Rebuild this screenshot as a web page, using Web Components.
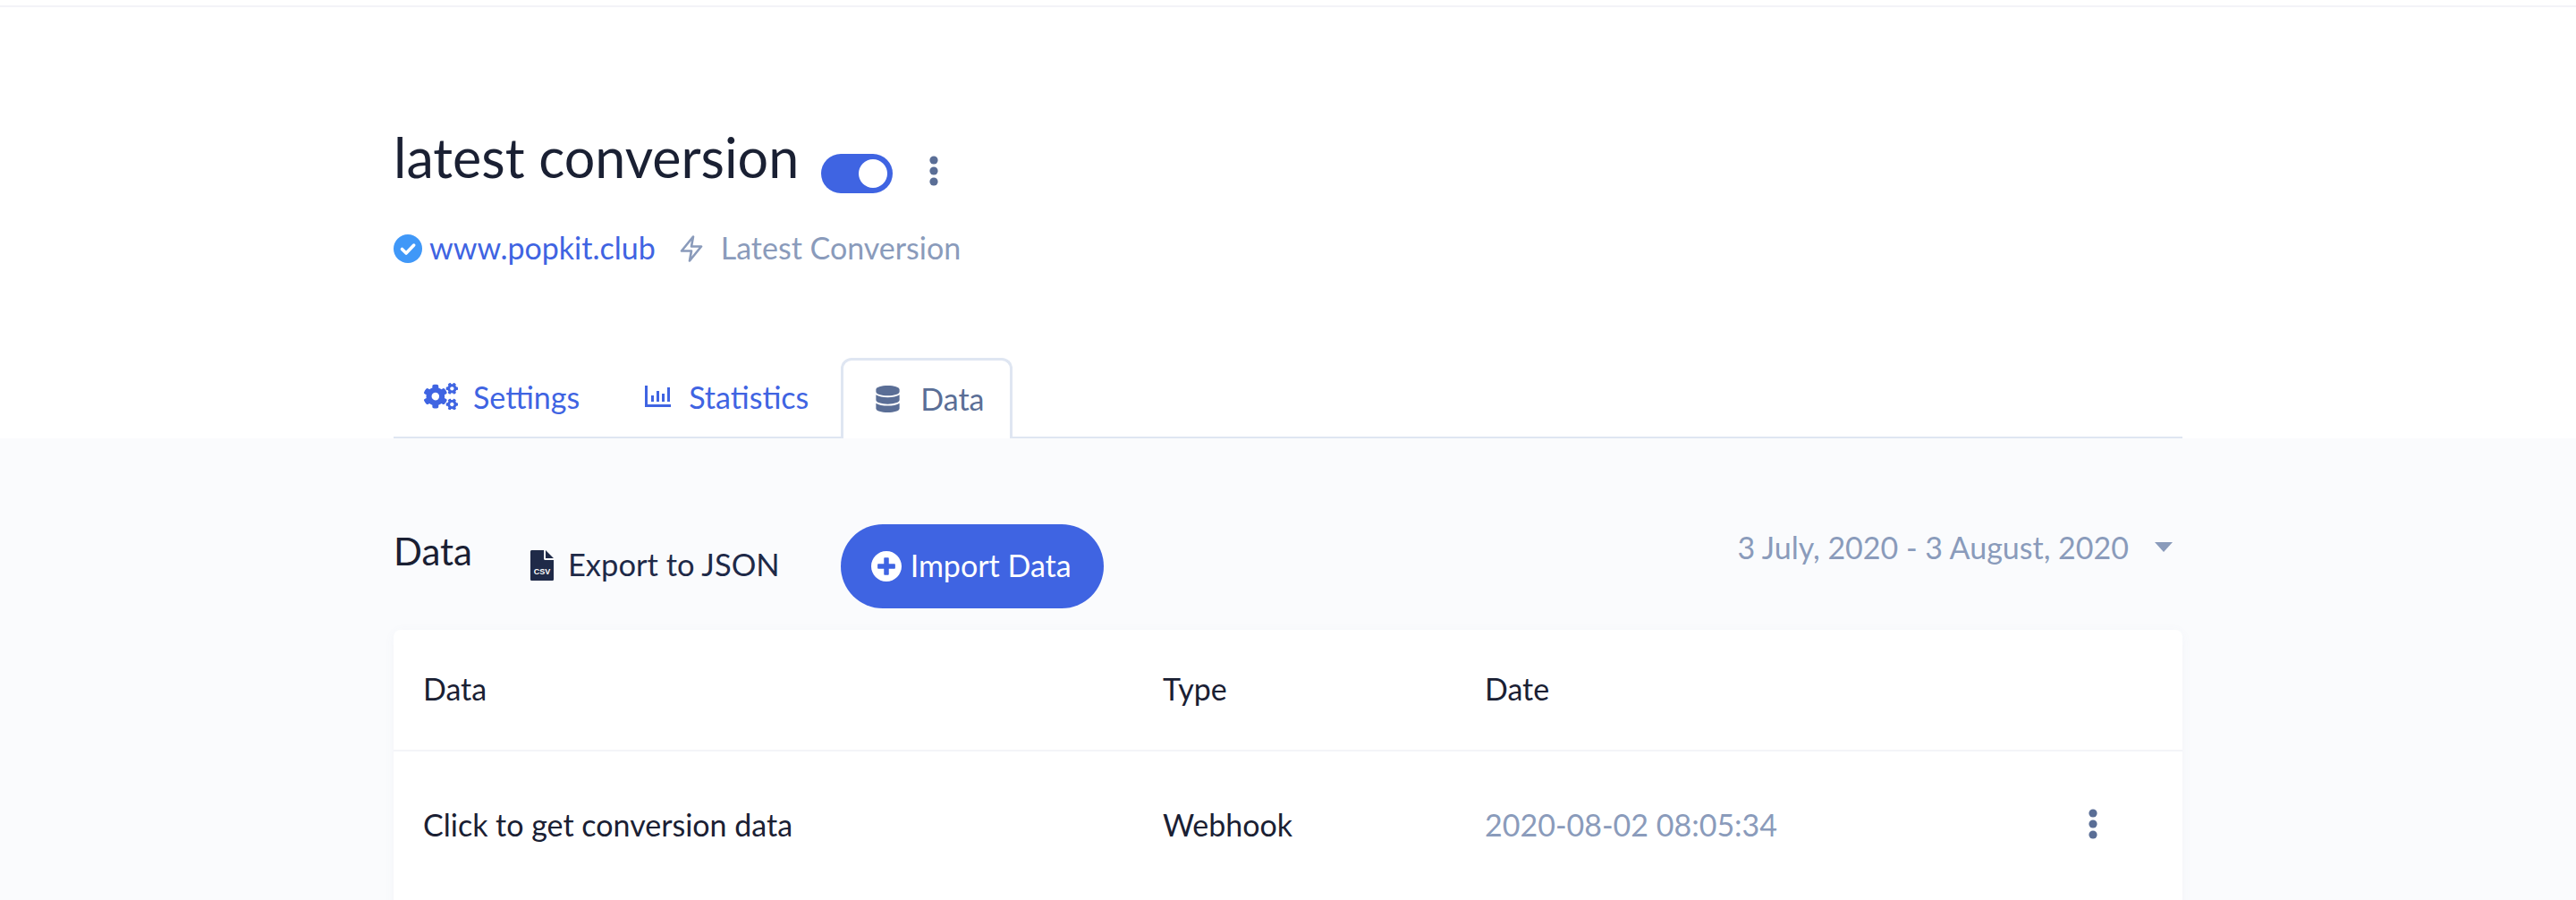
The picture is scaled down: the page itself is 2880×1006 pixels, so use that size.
<!DOCTYPE html>
<html>
<head>
<meta charset="utf-8">
<title>latest conversion</title>
<style>
    html, body { margin: 0; height: 1006px; overflow: hidden; background: #fff; }
    body { font-family: "Lato", "Liberation Sans", sans-serif; color: #1a2033; }
</style>
</head>
<body>
<campaign-header></campaign-header>
<data-panel></data-panel>

<script>
const DOTS = `<svg width="10" height="34" viewBox="0 0 10 34" fill="#5a6e96"><circle cx="5" cy="5" r="4.6"/><circle cx="5" cy="17" r="4.6"/><circle cx="5" cy="29" r="4.6"/></svg>`;

class CampaignHeader extends HTMLElement {
    constructor() {
        super();
        this.attachShadow({ mode: 'open' }).innerHTML = `
            <style>
                :host { display: block; border-top: 2px solid #f3f3f8; margin-top: 6px; }
                .wrap { width: 2000px; margin: 0 auto; padding-top: 136px; }
                .title { display: flex; align-items: flex-start; height: 64px; }
                h1 { margin: 0; font-size: 61px; line-height: 64px; font-weight: 400; color: #1a2033; }
                .toggle { width: 80px; height: 44px; margin: 28px 0 0 25px; border-radius: 22px; background: #3f64e2; display: flex; justify-content: flex-end; align-items: center; padding-right: 6px; box-sizing: border-box; }
                .toggle i { width: 32px; height: 32px; border-radius: 50%; background: #fff; }
                .more { margin: 30px 0 0 41px; }
                .meta { display: flex; align-items: center; height: 32px; margin-top: 54px; font-size: 34px; }
                .meta a { color: #3f64e2; margin-left: 8px; padding-bottom: 3px; }
                .meta span { color: #8a9bbb; margin-left: 20px; padding-bottom: 3px; }
                .meta .bolt { margin-left: 27px; }
                .tabs { display: flex; margin-top: 106px; border-bottom: 2px solid #dfe6f2; height: 88px; font-size: 34px; }
                .tab { display: flex; align-items: center; color: #3f64e2; padding-bottom: 2px; }
                .tab svg { fill: currentColor; display: block; }
                .settings { margin-left: 34px; }
                .settings svg { margin-right: 17px; }
                .stats { margin-left: 73px; }
                .stats svg { margin-right: 20px; }
                .data { margin-left: 36px; padding: 0 28px 2px 36px; height: 90px; box-sizing: border-box; color: #5a6e96; background: #fff; border: 3px solid #dfe6f2; border-bottom: none; border-radius: 12px 12px 0 0; margin-bottom: -2px; }
                .data svg { margin-right: 23px; }
            </style>
            <div class="wrap">
                <div class="title">
                    <h1>latest conversion</h1>
                    <div class="toggle"><i></i></div>
                    <div class="more">${DOTS}</div>
                </div>
                <div class="meta">
                    <svg width="32" height="32" viewBox="0 0 32 32"><circle cx="16" cy="16" r="16" fill="#4098f8"/><path d="M9.5 16.500l4.600 4.600 8.600-9" fill="none" stroke="#fff" stroke-width="3.600" stroke-linecap="round" stroke-linejoin="round"/></svg>
                    <a>www.popkit.club</a>
                    <svg class="bolt" width="26" height="30" viewBox="0 0 26 30"><path d="M15 1.500L2 17.500h11l-2 11 13-16H13z" fill="none" stroke="#8a9bbb" stroke-width="2.600" stroke-linejoin="round"/></svg>
                    <span>Latest Conversion</span>
                </div>
                <div class="tabs">
                    <div class="tab settings"><svg width="38" height="30.400" viewBox="0 0 640 512"><path d="M512.1 191l-8.2 14.3c-3 5.3-9.4 7.5-15.1 5.4-11.8-4.4-22.6-10.7-32.1-18.6-4.6-3.8-5.8-10.5-2.8-15.7l8.2-14.3c-6.9-8-12.3-17.3-15.9-27.4h-16.5c-6 0-11.2-4.3-12.2-10.3-2-12-2.1-24.6 0-37.1 1-6 6.2-10.4 12.2-10.4h16.5c3.6-10.1 9-19.4 15.9-27.4l-8.2-14.3c-3-5.2-1.9-11.9 2.8-15.7 9.5-7.9 20.4-14.2 32.1-18.6 5.7-2.1 12.1.1 15.1 5.4l8.2 14.3c10.5-1.9 21.2-1.9 31.7 0L552 6.3c3-5.3 9.4-7.5 15.1-5.4 11.8 4.4 22.6 10.7 32.1 18.6 4.6 3.8 5.8 10.5 2.8 15.7l-8.2 14.3c6.9 8 12.3 17.3 15.9 27.4h16.5c6 0 11.2 4.3 12.2 10.3 2 12 2.1 24.6 0 37.1-1 6-6.2 10.4-12.2 10.4h-16.5c-3.6 10.1-9 19.4-15.9 27.4l8.2 14.3c3 5.2 1.9 11.9-2.8 15.7-9.5 7.9-20.4 14.2-32.1 18.6-5.7 2.1-12.1-.1-15.1-5.4l-8.2-14.3c-10.4 1.9-21.2 1.9-31.7 0zm-10.5-58.8c38.5 29.6 82.4-14.3 52.8-52.8-38.5-29.7-82.4 14.3-52.8 52.8zM386.3 286.1l33.7 16.8c10.1 5.8 14.5 18.1 10.5 29.1-8.9 24.2-26.4 46.4-42.6 65.8-7.4 8.9-20.2 11.1-30.3 5.3l-29.1-16.8c-16 13.7-34.6 24.6-54.9 31.7v33.6c0 11.6-8.3 21.6-19.7 23.6-24.6 4.2-50.4 4.4-75.9 0-11.5-2-20-11.9-20-23.6V418c-20.3-7.2-38.9-18-54.9-31.7L74 403c-10 5.8-22.9 3.6-30.3-5.3-16.2-19.4-33.3-41.6-42.2-65.7-4-10.9.4-23.2 10.5-29.1l33.3-16.8c-3.9-20.9-3.9-42.4 0-63.4L12 205.8c-10.1-5.8-14.6-18.1-10.5-29 8.9-24.2 26-46.4 42.2-65.8 7.4-8.9 20.2-11.1 30.3-5.3l29.1 16.8c16-13.7 34.6-24.6 54.9-31.7V57.1c0-11.5 8.2-21.5 19.6-23.5 24.6-4.2 50.5-4.4 76-.1 11.5 2 20 11.9 20 23.6v33.6c20.3 7.2 38.9 18 54.9 31.7l29.1-16.8c10-5.8 22.9-3.6 30.3 5.3 16.2 19.4 33.2 41.6 42.1 65.8 4 10.9.1 23.2-10 29.1l-33.7 16.8c3.9 21 3.9 42.5 0 63.5zm-117.6 21.1c59.2-77-28.7-164.9-105.7-105.7-59.2 77 28.7 164.9 105.7 105.7zm243.4 182.7l-8.2 14.3c-3 5.3-9.4 7.5-15.1 5.4-11.8-4.4-22.6-10.7-32.1-18.6-4.6-3.8-5.8-10.5-2.8-15.7l8.2-14.3c-6.9-8-12.3-17.3-15.9-27.4h-16.5c-6 0-11.2-4.3-12.2-10.3-2-12-2.1-24.6 0-37.1 1-6 6.2-10.4 12.2-10.4h16.5c3.6-10.1 9-19.4 15.9-27.4l-8.2-14.3c-3-5.2-1.9-11.9 2.8-15.7 9.5-7.9 20.4-14.2 32.1-18.6 5.7-2.1 12.1.1 15.1 5.4l8.2 14.3c10.5-1.9 21.2-1.9 31.7 0l8.2-14.3c3-5.3 9.4-7.5 15.1-5.4 11.8 4.4 22.6 10.7 32.1 18.6 4.6 3.8 5.8 10.5 2.8 15.7l-8.2 14.3c6.9 8 12.3 17.3 15.9 27.4h16.5c6 0 11.2 4.3 12.2 10.3 2 12 2.1 24.6 0 37.1-1 6-6.2 10.4-12.2 10.4h-16.5c-3.6 10.1-9 19.4-15.9 27.4l8.2 14.3c3 5.2 1.9 11.9-2.8 15.7-9.5 7.9-20.4 14.2-32.1 18.6-5.7 2.1-12.1-.1-15.1-5.4l-8.2-14.3c-10.4 1.9-21.2 1.9-31.7 0zM501.6 431c38.5 29.6 82.4-14.3 52.8-52.8-38.5-29.6-82.4 14.3-52.8 52.8z"/></svg>Settings</div>
                    <div class="tab stats"><svg width="29" height="24" viewBox="0 0 29 24"><path d="M0 0h3v21h26v3H0z"/><rect x="7" y="11" width="3" height="7"/><rect x="13" y="6" width="3" height="12"/><rect x="19" y="9" width="3" height="9"/><rect x="25" y="2" width="3" height="16"/></svg>Statistics</div>
                    <div class="tab data"><svg width="27" height="30" viewBox="0 0 448 512"><path d="M448 73.143v45.714C448 159.143 347.667 192 224 192S0 159.143 0 118.857V73.143C0 32.857 100.333 0 224 0s224 32.857 224 73.143zM448 176v102.857C448 319.143 347.667 352 224 352S0 319.143 0 278.857V176c48.125 33.143 136.208 48.572 224 48.572S399.874 209.143 448 176zm0 160v102.857C448 479.143 347.667 512 224 512S0 479.143 0 438.857V336c48.125 33.143 136.208 48.572 224 48.572S399.874 369.143 448 336z"/></svg>Data</div>
                </div>
            </div>
        `;
    }
}
customElements.define('campaign-header', CampaignHeader);

class DataToolbar extends HTMLElement {
    constructor() {
        super();
        this.attachShadow({ mode: 'open' }).innerHTML = `
            <style>
                :host { display: flex; align-items: flex-start; height: 94px; font-size: 34px; }
                h2 { margin: 6px 0 0 0; font-size: 42px; line-height: 48px; font-weight: 400; color: #1a2033; }
                .export { display: flex; align-items: center; gap: 16px; margin: 21px 0 0 65px; line-height: 48px; font-size: 34.500px; color: #1f2a48; }
                .export svg { margin-top: 2px; }
                .import { display: flex; align-items: center; gap: 10px; width: 294px; height: 94px; box-sizing: border-box; padding: 0 0 4px 34px; margin-left: 68px; border-radius: 47px; background: #3f64e2; color: #fff; }
                .import svg { margin-top: 4px; }
                .range { display: flex; align-items: center; margin: 0 11px 0 auto; height: 50px; color: #8a9bbb; gap: 29px; }
                .caret { width: 0; height: 0; border: 10px solid transparent; border-top: 11px solid #8a9bbb; border-bottom: none; }
                svg { display: block; }
            </style>
            <h2>Data</h2>
            <div class="export">
                <svg width="26" height="34" viewBox="0 0 26 34"><path d="M1.600 0H15v9.500c0 .8.700 1.500 1.500 1.500H26v21.400c0 .9-.7 1.600-1.600 1.600H1.600C.7 34 0 33.300 0 32.400V1.600C0 .7.700 0 1.600 0z M17 0l9 9h-9z" fill="#1f2a48"/><text x="13" y="27" font-size="9" font-weight="700" fill="#fff" text-anchor="middle" font-family="Liberation Sans Narrow, Liberation Sans, sans-serif">CSV</text></svg>
                Export to JSON
            </div>
            <div class="import">
                <svg width="34" height="34" viewBox="8 8 496 496" fill="#fff"><path d="M256 8C119 8 8 119 8 256s111 248 248 248 248-111 248-248S393 8 256 8zm144 276c0 6.600-5.400 12-12 12h-92v92c0 6.600-5.400 12-12 12h-56c-6.600 0-12-5.400-12-12v-92h-92c-6.600 0-12-5.400-12-12v-56c0-6.600 5.400-12 12-12h92v-92c0-6.600 5.400-12 12-12h56c6.600 0 12 5.400 12 12v92h92c6.600 0 12 5.400 12 12v56z"/></svg>
                Import Data
            </div>
            <div class="range">3 July, 2020 - 3 August, 2020<i class="caret"></i></div>
        `;
    }
}
customElements.define('data-toolbar', DataToolbar);

class DataRow extends HTMLElement {
    constructor() {
        super();
        this.attachShadow({ mode: 'open' }).innerHTML = `
            <style>
                :host { display: grid; grid-template-columns: 827px 360px 1fr auto; align-items: center; height: var(--row-height, 168px); padding: 0 95px var(--row-pad, 0) 33px; font-size: 34px; color: #1a2033; box-sizing: border-box; }
                ::slotted([slot=date]) { color: var(--date-color, inherit); }
            </style>
            <slot name="data"></slot>
            <slot name="type"></slot>
            <slot name="date"></slot>
            <slot name="actions"></slot>
        `;
    }
}
customElements.define('data-row', DataRow);

class DataPanel extends HTMLElement {
    constructor() {
        super();
        this.attachShadow({ mode: 'open' }).innerHTML = `
            <style>
                :host { display: block; height: 516px; overflow: hidden; background: #fafbfd; }
                .wrap { width: 2000px; margin: 0 auto; padding-top: 96px; }
                .card { margin-top: 24px; height: 400px; background: #fff; border-radius: 8px 8px 0 0; box-shadow: 0 2px 12px rgba(90, 110, 150, .05); }
                .head { --row-height: 136px; --row-pad: 4px; border-bottom: 2px solid #f3f4f8; }
                .body { --date-color: #8a9bbb; --row-pad: 6px; }
                svg { display: block; }
            </style>
            <div class="wrap">
                <data-toolbar></data-toolbar>
                <div class="card">
                    <data-row class="head">
                        <div slot="data">Data</div>
                        <div slot="type">Type</div>
                        <div slot="date">Date</div>
                    </data-row>
                    <data-row class="body">
                        <div slot="data">Click to get conversion data</div>
                        <div slot="type">Webhook</div>
                        <div slot="date">2020-08-02 08:05:34</div>
                        <div slot="actions">${DOTS}</div>
                    </data-row>
                </div>
            </div>
        `;
    }
}
customElements.define('data-panel', DataPanel);
</script>
</body>
</html>
